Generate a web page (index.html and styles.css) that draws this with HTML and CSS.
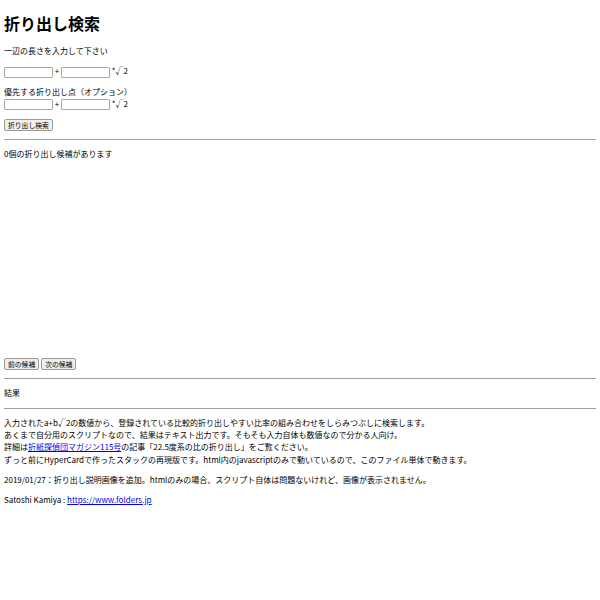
FILE: index.html
```html
<!DOCTYPE html>
<html lang="ja">
<head>
<meta charset="utf-8">
<title>折り出し検索</title>
<link rel="stylesheet" href="styles.css">
</head>
<body>
<h1 class="title">折り出し検索</h1>
<p class="para">一辺の長さを入力して下さい</p>
<p class="para"><input class="num" type="text"> + <input class="num" type="text"> *√2</p>
<p class="para">優先する折り出し点（オプション）<br><input class="num" type="text"> + <input class="num" type="text"> *√2</p>
<p class="para"><button class="btn" type="button">折り出し検索</button></p>
<hr class="rule">
<p class="para">0個の折り出し候補があります</p>
<div class="canvas"></div>
<p class="para nav"><button class="btn" type="button">前の候補</button><button class="btn" type="button">次の候補</button></p>
<hr class="rule">
<p class="para">結果</p>
<hr class="rule">
<p class="para">入力されたa+b√2の数値から、登録されている比較的折り出しやすい比率の組み合わせをしらみつぶしに検索します。<br>あくまで自分用のスクリプトなので、結果はテキスト出力です。そもそも入力自体も数値なので分かる人向け。<br>詳細は<a class="link" href="#">折紙探偵団マガジン115号</a>の記事「22.5度系の比の折り出し」をご覧ください。<br>ずっと前にHyperCardで作ったスタックの再現版です。html内のjavascriptのみで動いているので、このファイル単体で動きます。</p>
<p class="para">2019/01/27：折り出し説明画像を追加。htmlのみの場合、スクリプト自体は問題ないけれど、画像が表示されません。</p>
<p class="para">Satoshi Kamiya : <a class="link" href="#">https://www.folders.jp</a></p>
</body>
</html>
```
FILE: styles.css
```css
html {
  background: #ffffff;
}
body {
  margin: 0 4px 4px;
  padding-top: 1px;
  font-family: "Noto Sans CJK JP", "Noto Sans", sans-serif;
  font-size: 8px;
  line-height: 12.3px;
  color: #000000;
}
.title {
  font-size: 16px;
  line-height: 24px;
  font-weight: bold;
  margin: 9.5px 0 10.7px;
}
.para {
  margin: 8px 0;
}
.num {
  box-sizing: border-box;
  width: 49px;
  height: 11px;
  margin: 0;
  padding: 0 2px;
  border: 1px solid #a8a8a8;
  border-radius: 1px;
  font-size: 7px;
  vertical-align: middle;
  background: #ffffff;
}
.btn {
  box-sizing: border-box;
  height: 12px;
  margin: 0 2px 0 0;
  padding: 0 3px;
  border: 1px solid #9a9a9a;
  border-radius: 2px;
  background: #efefef;
  font-family: "Noto Sans CJK JP", "Noto Sans", sans-serif;
  font-size: 6.8px;
  line-height: 10px;
  color: #000000;
  vertical-align: middle;
}
.rule {
  margin: 4px 0;
  border: 0;
  border-top: 1px solid #a0a0a0;
  height: 0;
}
.canvas {
  height: 181px;
}
.link {
  color: #0000ee;
  text-decoration: underline;
}
```
